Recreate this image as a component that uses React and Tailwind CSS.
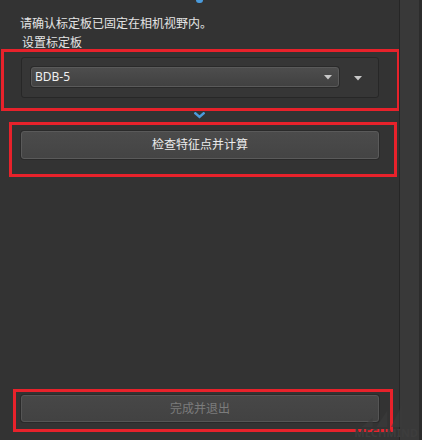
const font = { fontFamily: '"Noto Sans", "Noto Sans CJK SC", sans-serif' };

const Caret = ({ className }) => (
  <svg width="8" height="5" viewBox="0 0 8 5" className={className}>
    <path d="M0 0 L8 0 L4 4.5 Z" fill="#c8c8c8" />
  </svg>
);

const App = () => {
  return (
    <div className="w-[422px] h-[440px] flex bg-[#333333] overflow-hidden relative text-[12px]" style={font}>
      <div className="w-[399px] flex flex-col">
        {/* step indicator, cut off at the top */}
        <div className="h-[4px] flex justify-center">
          <div className="w-[7px] h-[3px] rounded-b-full bg-[#4a9bdc]" />
        </div>

        <div className="mt-[13px] ml-[20px] leading-[14px] text-[#e4e4e4]">请确认标定板已固定在相机视野内。</div>
        <div className="mt-[5px] ml-[22px] leading-[14px] text-[#e4e4e4]">设置标定板</div>

        {/* board selector */}
        <div className="mt-[-1px] ml-[1px] w-[399px] h-[62px] border-[3px] border-[#e8222b] pl-[17px] pt-[5px]">
          <div className="w-[358px] h-[41px] rounded-[3px] border border-[#272727] bg-[#363636] flex items-start pl-[9px] pt-[9px]">
            <div className="w-[308px] h-[20px] rounded-[3px] border border-[#5a5a5a] bg-gradient-to-b from-[#4d4d4d] to-[#414141] shadow-[0_0_0_1px_#2a2a2a] flex items-center pl-[3px] pr-[6px]">
              <span className="flex-1 text-[#f0f0f0] leading-none">BDB-5</span>
              <Caret />
            </div>
            <Caret className="ml-[15px] mt-[9px]" />
          </div>
        </div>

        <div className="h-[11px] flex justify-center">
          <svg width="11" height="7" viewBox="0 0 11 7" className="mt-[1px]">
            <path d="M0.5 0.5 L5.5 5 L10.5 0.5" stroke="#4a9bdc" strokeWidth="2.4" fill="none" />
          </svg>
        </div>

        {/* check button */}
        <div className="ml-[9px] w-[388px] h-[55px] border-[3px] border-[#e8222b] pl-[9px] pt-[6px]">
          <button className="w-[358px] h-[28px] rounded-[3px] border border-[#5a5a5a] bg-gradient-to-b from-[#4b4b4b] to-[#444444] shadow-[0_0_0_1px_#2a2a2a] text-[#ececec] leading-none">
            检查特征点并计算
          </button>
        </div>

        <div className="flex-1" />

        {/* finish button, disabled */}
        <div className="ml-[13px] mb-[8px] w-[380px] h-[43px] border-[3px] border-[#e8222b] pl-[5px] pt-[3px]">
          <button disabled className="w-[358px] h-[27px] rounded-[3px] border border-[#555555] bg-gradient-to-b from-[#474747] to-[#424242] shadow-[0_0_0_1px_#2a2a2a] text-[#7c7c7c] leading-none">
            完成并退出
          </button>
        </div>
      </div>

      <div className="w-px bg-[#262626]" />
      <div className="w-[19px] bg-[#393939]" />
      <div className="w-[3px] bg-[#2c2c2c]" />

      {/* faint watermark */}
      <div className="absolute right-[4px] bottom-[1px] flex flex-col items-end pointer-events-none">
        <svg width="60" height="22" viewBox="0 0 60 24" className="mr-[8px] opacity-60">
          <path d="M10 24 L22 14 L22 24 Z M26 24 L38 6 L38 24 Z M42 24 L54 0 L54 24 Z" fill="#3c3c3c" />
        </svg>
        <span className="text-[11px] font-bold text-[#3d3d3d] leading-[12px]">MECHMIND</span>
      </div>
    </div>
  );
};

export default App;
